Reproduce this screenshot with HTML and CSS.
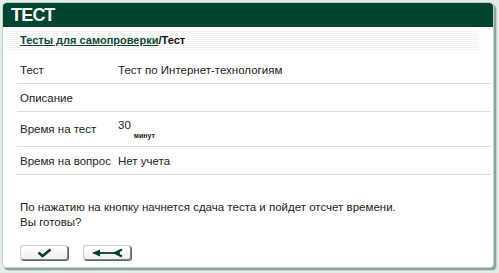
FILE: index.html
```html
<!DOCTYPE html>
<html lang="ru">
<head>
<meta charset="utf-8">
<title>Тест</title>
<link rel="stylesheet" href="styles.css">
</head>
<body>
<div class="window">
  <div class="header"><span class="title">Тест</span></div>
  <div class="crumbs"><a class="crumb-link" href="#">Тесты для самопроверки</a>/<span class="crumb-cur">Тест</span></div>
  <div class="table">
    <div class="row"><div class="label">Тест</div><div class="value">Тест по Интернет-технологиям</div></div>
    <div class="row"><div class="label">Описание</div><div class="value"></div></div>
    <div class="row tall"><div class="label">Время на тест</div><div class="value">30<span class="unit">минут</span></div></div>
    <div class="row"><div class="label">Время на вопрос</div><div class="value">Нет учета</div></div>
  </div>
  <p class="note">По нажатию на кнопку начнется сдача теста и пойдет отсчет времени.<br>Вы готовы?</p>
  <div class="buttons">
    <button class="btn" type="button" aria-label="OK">
      <svg width="15" height="10" viewBox="0 0 15 10"><path d="M1.5 4.5 L5.5 8 L13.5 1.5" fill="none" stroke="#0d3d2c" stroke-width="2.6"/></svg>
    </button>
    <button class="btn" type="button" aria-label="Назад">
      <svg width="32" height="10" viewBox="0 0 32 10"><path d="M1 5 L9 1.5 L9 8.5 Z" fill="#0d3d2c"/><path d="M8 5 H29" stroke="#0d3d2c" stroke-width="1.8"/><path d="M31 1.5 L24 5 L31 8.5" fill="none" stroke="#0d3d2c" stroke-width="2.2"/></svg>
    </button>
  </div>
</div>
</body>
</html>
```

FILE: styles.css
```css
html, body {
  margin: 0;
  padding: 0;
}
body {
  background: #e4ecea;
  width: 499px;
  height: 273px;
  overflow: hidden;
  font-family: "Liberation Sans", Arial, sans-serif;
  font-size: 11.5px;
  color: #222;
}
.window {
  box-sizing: border-box;
  margin: 2px 0 0 2px;
  width: 492px;
  height: 266px;
  background: #fff;
  border: 1px solid #c4d0cc;
  border-radius: 5px 5px 4px 4px;
  box-shadow: 2px 2px 0 #8ea39b, 3px 3px 0 #c9d5d1;
  display: flex;
  flex-direction: column;
}
.header {
  height: 24px;
  background: #01452f;
  border-radius: 4px 4px 0 0;
  display: flex;
  align-items: center;
  padding-left: 8px;
}
.title {
  color: #fff;
  font-weight: bold;
  font-size: 18px;
  text-transform: uppercase;
  letter-spacing: -0.8px;
}
.crumbs {
  margin: 3px 0 0 1px;
  width: 474px;
  height: 20px;
  box-sizing: border-box;
  padding: 4px 0 0 16px;
  font-size: 11px;
  font-weight: bold;
  color: #111;
  background: repeating-linear-gradient(to bottom, #ffffff 0, #ffffff 1px, #f1f3f2 1px, #f1f3f2 2px);
}
.crumb-link {
  color: #0d4a35;
  text-decoration: underline;
}
.table {
  margin: 6px 2px 0 14px;
  display: flex;
  flex-direction: column;
}
.row {
  display: grid;
  grid-template-columns: 98px 1fr;
  align-items: center;
  height: 28px;
  padding-left: 3px;
  border-bottom: 1px solid #dedede;
  box-sizing: border-box;
}
.row.tall {
  height: 35px;
}
.unit {
  font-size: 7px;
  font-weight: bold;
  vertical-align: -9px;
  margin-left: 3px;
}
.note {
  margin: 25px 0 0 17px;
  line-height: 15px;
}
.buttons {
  display: flex;
  gap: 15px;
  margin: 15px 0 0 17px;
}
.btn {
  width: 48px;
  height: 15px;
  padding: 0;
  border: 1px solid #c9cfcd;
  border-right-color: #7e8784;
  border-bottom-color: #7e8784;
  border-radius: 3px;
  background: linear-gradient(to bottom, #ffffff, #eef0ef);
  box-shadow: 1px 1px 0 #5f6966;
  display: flex;
  align-items: center;
  justify-content: center;
}
.btn svg {
  display: block;
}
```
